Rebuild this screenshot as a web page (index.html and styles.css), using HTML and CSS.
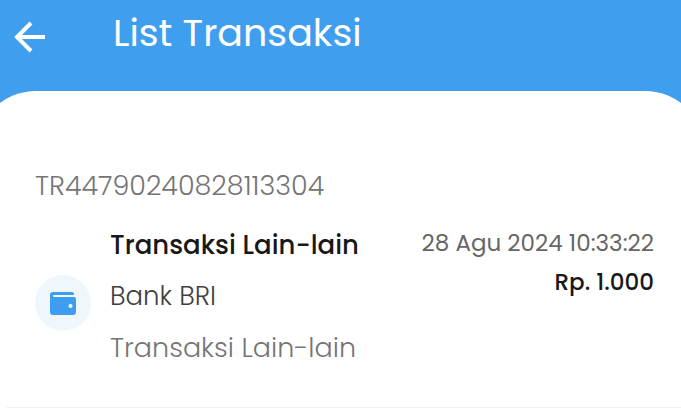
FILE: index.html
```html
<!DOCTYPE html>
<html lang="id">
<head>
<meta charset="utf-8">
<meta name="viewport" content="width=device-width, initial-scale=1">
<title>List Transaksi</title>
<link rel="stylesheet" href="styles.css">
</head>
<body>
<header class="topbar">
  <button class="back" type="button" aria-label="Kembali">
    <svg viewBox="0 0 32 32" width="32" height="32" fill="none" stroke="#fff" stroke-width="4"><path d="M32 16H4M18 2L4 16l14 14"/></svg>
  </button>
  <h1 class="title">List Transaksi</h1>
</header>
<main class="sheet">
  <article class="transaction">
    <p class="code">TR44790240828113304</p>
    <div class="row">
      <span class="badge">
        <svg viewBox="0 0 26 23" width="26" height="23"><path fill="#3f9def" d="M3 0h19a2 2 0 0 1 2 2v1H4a1 1 0 0 0 0 2h20a2 2 0 0 1 2 2v13a3 3 0 0 1-3 3H3a3 3 0 0 1-3-3V3a3 3 0 0 1 3-3z"/><circle cx="20.500" cy="14" r="2" fill="#fff"/></svg>
      </span>
      <div class="details">
        <h2 class="name">Transaksi Lain-lain</h2>
        <p class="bank">Bank BRI</p>
        <p class="note">Transaksi Lain-lain</p>
      </div>
      <div class="summary">
        <time class="date" datetime="2024-08-28T10:33:22">28 Agu 2024 10:33:22</time>
        <strong class="amount">Rp. 1.000</strong>
      </div>
    </div>
  </article>
</main>
</body>
</html>
```
FILE: styles.css
```css
* { box-sizing: border-box; }
body {
  margin: 0;
  overflow-x: hidden;
  background: #409eef;
  font-family: Poppins, "Open Sans", sans-serif;
}
h1, h2, p { margin: 0; font-weight: 400; }
.topbar {
  display: flex;
  align-items: center;
  gap: 68px;
  padding: 9px 13px 34px;
}
.back {
  display: flex;
  padding: 8px 0 0;
  border: 0;
  background: none;
}
.title { color: #fff; font-size: 38px; line-height: 48px; }
.sheet {
  min-height: calc(100vh - 91px);
  margin: 0 -24px;
  padding: 77px 24px 0 30px;
  border-radius: 60px 60px 0 0;
  background: #fff;
}
.transaction {
  padding: 0 27px 34px 29px;
  border-bottom: 1px solid #f2f2f2;
}
.code { color: #757575; font-size: 27px; font-weight: 300; line-height: 36px; }
.row { display: flex; align-items: center; margin-top: 16px; }
.badge {
  display: flex;
  align-items: center;
  justify-content: center;
  width: 56px;
  height: 56px;
  margin: 13px 19px 0 0;
  border-radius: 50%;
  background: #eff7fd;
}
.details { flex: 1; font-size: 26px; line-height: 51px; }
.name { color: #181818; font-size: 26px; font-weight: 500; }
.bank { color: #404040; font-weight: 300; }
.note { color: #757575; font-size: 27px; font-weight: 300; }
.summary {
  display: flex;
  flex-direction: column;
  align-self: flex-start;
  align-items: flex-end;
  padding-top: 4px;
  line-height: 39px;
}
.date { color: #666; font-size: 23px; }
.amount { color: #181818; font-size: 23px; font-weight: 500; }
```
